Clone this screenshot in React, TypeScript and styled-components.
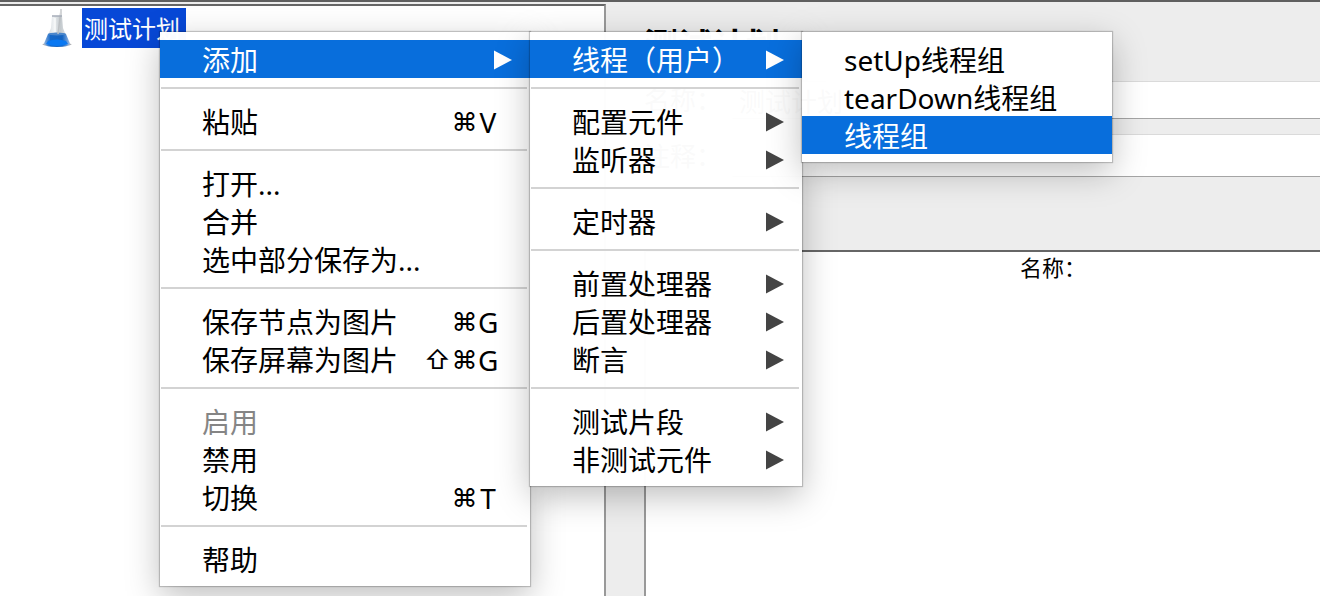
import React from "react";
import styled, { createGlobalStyle } from "styled-components";

const GlobalStyle = createGlobalStyle`
  * { box-sizing: border-box; }
  body {
    margin: 0;
    background: #ededed;
    color: #000;
    font-family: "Noto Sans", "Noto Sans CJK SC", sans-serif;
    overflow: hidden;
  }
`;

const Window = styled.div`
  position: relative;
  display: flex;
  gap: 38px;
  min-height: 100vh;
  border-top: 2px solid #5f5f5f;
  overflow: hidden;
`;

const TreePane = styled.nav`
  flex: 0 0 606px;
  margin-top: 2px;
  padding: 2px 0 0 42px;
  background: #fff;
  border-top: 2px solid #666;
  border-right: 2px solid #999;
`;

const TreeNode = styled.div`
  display: flex;
  align-items: center;
  gap: 10px;
  height: 40px;
`;

const NodeLabel = styled.span`
  padding: 0 6px 0 2px;
  background: #0748d7;
  color: #fff;
  font-family: "Noto Sans CJK SC", sans-serif;
  font-size: 24px;
  line-height: 40px;
`;

const Editor = styled.main`
  display: flex;
  flex: 1;
  flex-direction: column;
  min-width: 0;
`;

const Form = styled.form`
  padding-bottom: 73px;
`;

const Title = styled.h1`
  margin: 0;
  padding: 18px 0 13px;
  font-family: "Noto Sans CJK SC", sans-serif;
  font-size: 34px;
  font-weight: 700;
  line-height: 48px;
`;

const Field = styled.div<{ $height: number }>`
  display: flex;
  align-items: stretch;
  height: ${(p) => p.$height}px;
  & + & { margin-top: 15px; }
`;

const FieldLabel = styled.label`
  flex: 0 0 88px;
  align-self: center;
  font-size: 26px;
  line-height: 36px;
`;

const TextField = styled.input`
  flex: 1;
  min-width: 0;
  padding: 0 6px;
  border: 1px solid #dadada;
  border-right: 0;
  border-bottom-color: #a5a5a5;
  background: #fff;
  font-family: "Noto Sans CJK SC", sans-serif;
  font-size: 26px;
  outline: none;
`;

const Variables = styled.section`
  flex: 1;
  overflow: hidden;
  background: #fff;
  border-top: 2px solid #666;
  border-left: 2px solid #999;
`;

const VariableTable = styled.table`
  width: calc(100% + 140px);
  border-collapse: collapse;
  th {
    padding: 0;
    font-family: "Noto Sans CJK SC", sans-serif;
    font-size: 22px;
    font-weight: 400;
    line-height: 28px;
    text-align: center;
  }
`;

const MenuList = styled.ul<{ $width: number }>`
  width: ${(p) => p.$width}px;
  margin: 0;
  padding: 8px 0;
  list-style: none;
  background: rgba(255, 255, 255, 0.98);
  box-shadow: 0 0 1px 1px rgba(0, 0, 0, 0.2), 0 10px 32px rgba(0, 0, 0, 0.26);
`;

const ContextMenu = styled.div`
  position: absolute;
  top: 30px;
  left: 160px;
`;

const Submenu = styled.div`
  position: absolute;
  top: -8px;
  left: 100%;
`;

const MenuRow = styled.li`
  position: relative;
`;

const MenuButton = styled.button<{ $active: boolean; $arrow: boolean }>`
  display: flex;
  align-items: center;
  justify-content: space-between;
  width: 100%;
  height: 38px;
  padding: 2px ${(p) => (p.$arrow ? 18 : 32)}px 0 42px;
  border: 0;
  background: ${(p) => (p.$active ? "rgba(3, 107, 219, 0.98)" : "transparent")};
  color: ${(p) => (p.$active ? "#fff" : "#000")};
  font-family: inherit;
  font-size: 28px;
  line-height: 36px;
  text-align: left;
  white-space: nowrap;
  &:disabled { color: #858585; }
`;

const Shortcut = styled.span`
  display: flex;
  align-items: center;
`;

const Modifier = styled.span`
  width: 27px;
  font-family: "Inter", "DejaVu Sans", sans-serif;
  font-size: 26px;
  text-align: center;
`;

const Key = styled.span`
  width: 20px;
  text-align: center;
`;

const Separator = styled.li`
  height: 2px;
  margin: 9px 3px 13px 1px;
  background: #d3d3d3;
`;

const Arrow = () => (
  <svg width="18" height="20" viewBox="0 0 18 20" aria-hidden="true">
    <path d="M0 0.5 18 10 0 19.5Z" fill="currentColor" />
  </svg>
);

const ArrowBox = styled.span<{ $active: boolean }>`
  display: flex;
  color: ${(p) => (p.$active ? "#fff" : "#444")};
`;

const Flask = () => (
  <svg width="30" height="40" viewBox="0 0 30 40" aria-hidden="true">
    <defs>
      <linearGradient id="glass" x1="0" x2="1">
        <stop offset="0" stopColor="#c4cacf" />
        <stop offset="0.35" stopColor="#eef1f3" />
        <stop offset="0.65" stopColor="#c3c9cd" />
        <stop offset="1" stopColor="#eceef0" />
      </linearGradient>
      <linearGradient id="liquid" x1="0" x2="1">
        <stop offset="0" stopColor="#8fb4e0" />
        <stop offset="0.25" stopColor="#1668c8" />
        <stop offset="0.7" stopColor="#1463c0" />
        <stop offset="1" stopColor="#9dbde8" />
      </linearGradient>
    </defs>
    <ellipse cx="15" cy="36.5" rx="14.5" ry="1.6" fill="#8c8f94" opacity="0.7" />
    <path d="M10 8h10l1 12 4 10 2 6q-12 4-24 0l2-6 4-10Z" fill="url(#glass)" />
    <path d="M6 26q9-2 18 0l4 9.500q-1 3.500-13 3.500t-13-3.500Z" fill="url(#liquid)" />
    <path d="M6 33q9-3 18 0l2 3q-11 4-22 0Z" fill="#0a78f2" />
    <ellipse cx="15" cy="26" rx="9" ry="1.500" fill="#4b86cb" />
    <path d="M19 2 16 26" stroke="#bcc0c3" strokeWidth="1.500" />
    <path d="M19 1v7" stroke="#d4d6d8" strokeWidth="2" />
    <path d="M10 8h10" stroke="#a6adb8" strokeWidth="1.500" />
    <path d="M13 10v14" stroke="#fff" strokeWidth="1.500" opacity="0.8" />
  </svg>
);

type Entry =
  | "separator"
  | {
      label: string;
      modifiers?: string[];
      letter?: string;
      disabled?: boolean;
      active?: boolean;
      arrow?: boolean;
      width?: number;
      children?: Entry[];
    };

const threadItems: Entry[] = [
  { label: "setUp线程组" },
  { label: "tearDown线程组" },
  { label: "线程组", active: true },
];

const addItems: Entry[] = [
  { label: "线程（用户）", arrow: true, active: true, width: 310, children: threadItems },
  "separator",
  { label: "配置元件", arrow: true },
  { label: "监听器", arrow: true },
  "separator",
  { label: "定时器", arrow: true },
  "separator",
  { label: "前置处理器", arrow: true },
  { label: "后置处理器", arrow: true },
  { label: "断言", arrow: true },
  "separator",
  { label: "测试片段", arrow: true },
  { label: "非测试元件", arrow: true },
];

const rootItems: Entry[] = [
  { label: "添加", arrow: true, active: true, width: 272, children: addItems },
  "separator",
  { label: "粘贴", modifiers: ["⌘"], letter: "V" },
  "separator",
  { label: "打开..." },
  { label: "合并" },
  { label: "选中部分保存为..." },
  "separator",
  { label: "保存节点为图片", modifiers: ["⌘"], letter: "G" },
  { label: "保存屏幕为图片", modifiers: ["⇧", "⌘"], letter: "G" },
  "separator",
  { label: "启用", disabled: true },
  { label: "禁用" },
  { label: "切换", modifiers: ["⌘"], letter: "T" },
  "separator",
  { label: "帮助" },
];

function Menu({ items, width }: { items: Entry[]; width: number }) {
  return (
    <MenuList role="menu" $width={width}>
      {items.map((item, i) =>
        item === "separator" ? (
          <Separator key={i} role="separator" />
        ) : (
          <MenuRow key={i} role="none">
            <MenuButton
              type="button"
              role="menuitem"
              disabled={item.disabled}
              $active={!!item.active}
              $arrow={!!item.arrow}
            >
              <span>{item.label}</span>
              {item.letter && (
                <Shortcut>
                  {item.modifiers?.map((m) => (
                    <Modifier key={m}>{m}</Modifier>
                  ))}
                  <Key>{item.letter}</Key>
                </Shortcut>
              )}
              {item.arrow && (
                <ArrowBox $active={!!item.active}>
                  <Arrow />
                </ArrowBox>
              )}
            </MenuButton>
            {item.children && (
              <Submenu>
                <Menu items={item.children} width={item.width ?? 272} />
              </Submenu>
            )}
          </MenuRow>
        )
      )}
    </MenuList>
  );
}

export default function App() {
  return (
    <>
      <GlobalStyle />
      <Window>
        <TreePane>
          <TreeNode>
            <Flask />
            <NodeLabel>测试计划</NodeLabel>
          </TreeNode>
        </TreePane>
        <Editor>
          <Form>
            <Title>测试计划</Title>
            <Field $height={38}>
              <FieldLabel htmlFor="plan-name">名称：</FieldLabel>
              <TextField id="plan-name" defaultValue="测试计划" />
            </Field>
            <Field $height={43}>
              <FieldLabel htmlFor="plan-comment">注释：</FieldLabel>
              <TextField id="plan-comment" />
            </Field>
          </Form>
          <Variables>
            <VariableTable>
              <thead>
                <tr>
                  <th scope="col">名称：</th>
                </tr>
              </thead>
            </VariableTable>
          </Variables>
        </Editor>
        <ContextMenu>
          <Menu items={rootItems} width={370} />
        </ContextMenu>
      </Window>
    </>
  );
}
